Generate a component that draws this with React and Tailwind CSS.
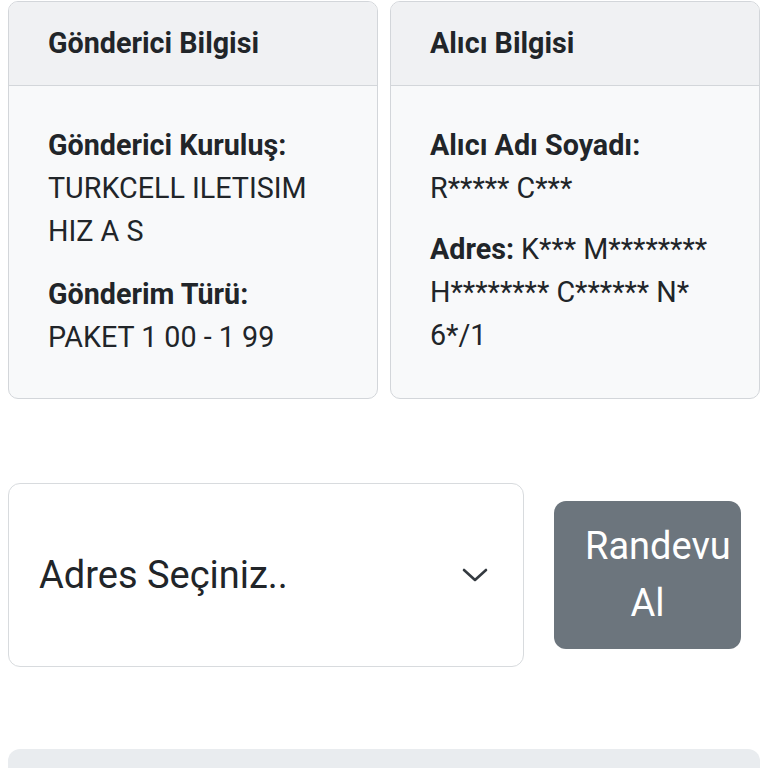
function InfoCard({ title, children }) {
  return (
    <div className="rounded-[10px] border border-[#d3d6da] bg-[#f8f9fa] overflow-hidden">
      <div className="h-[84px] flex items-center px-[39px] bg-[#f0f1f3] border-b border-[#d3d6da]">
        <h2 className="text-[28.7px] font-bold text-[#212529]">{title}</h2>
      </div>
      <div className="px-[39px] pt-[38px] pb-[39px] text-[28.7px] leading-[43px] text-[#212529]">
        {children}
      </div>
    </div>
  );
}

export default function App() {
  return (
    <div className="min-h-[768px] bg-white px-2 pt-px font-['Roboto',sans-serif] overflow-hidden">
      {/* Cards */}
      <div className="grid grid-cols-2 gap-3">
        <InfoCard title="Gönderici Bilgisi">
          <p className="font-bold">Gönderici Kuruluş:</p>
          <p>TURKCELL ILETISIM HIZ A S</p>
          <p className="font-bold mt-[20px]">Gönderim Türü:</p>
          <p>PAKET 1 00 - 1 99</p>
        </InfoCard>
        <InfoCard title="Alıcı Bilgisi">
          <p className="font-bold">Alıcı Adı Soyadı:</p>
          <p>R***** C***</p>
          <p className="mt-[18px]">
            <span className="font-bold">Adres:</span> K*** M******** H******** C****** N* 6*/1
          </p>
        </InfoCard>
      </div>

      {/* Address select + button */}
      <div className="flex items-center mt-[84px]">
        <div className="w-[516px] h-[184px] rounded-[12px] border border-[#d8dbde] bg-white flex items-center justify-between pl-[30px] pr-[35px]">
          <span className="text-[38px] text-[#212529]">Adres Seçiniz..</span>
          <svg width="26" height="14" viewBox="0 0 26 14" fill="none" className="text-[#343a40]">
            <polyline points="2,2 13,12 24,2" stroke="currentColor" strokeWidth="2.6" strokeLinecap="round" strokeLinejoin="round" />
          </svg>
        </div>
        <button className="ml-[30px] w-[187px] h-[148px] rounded-[12px] bg-[#6c757d] text-white text-[38px] leading-[57px] px-[31px] text-center">
          Randevu Al
        </button>
      </div>

      {/* Bottom bar */}
      <div className="mt-[82px] h-[40px] rounded-t-[12px] bg-[#e9ecef]" />
    </div>
  );
}
